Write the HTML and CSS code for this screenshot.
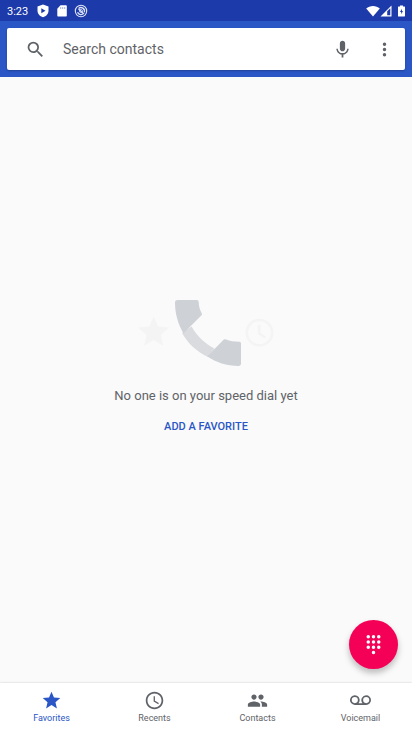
FILE: index.html
```html
<!DOCTYPE html>
<html lang="en">
<head>
<meta charset="utf-8">
<meta name="viewport" content="width=device-width, initial-scale=1">
<title>Phone</title>
<link rel="stylesheet" href="styles.css">
</head>
<body>
<div class="status">
  <span class="clock">3:23</span>
  <svg class="status-icon" viewBox="0 0 14 14" aria-hidden="true"><path d="M7 .5 1.500 2.600v4.100C1.500 9.700 3.900 12.400 7 13.200c3.100-.8 5.500-3.500 5.500-6.500V2.600z" fill="#fff"/><path d="M5.300 4.300v5L9.500 6.800z" fill="#1c3aa9"/></svg>
  <svg class="status-icon" viewBox="0 0 14 14" aria-hidden="true"><path d="M5.500 1.200h5.300c.6 0 1 .4 1 1v9.300c0 .6-.4 1-1 1H3.300c-.6 0-1-.4-1-1V4.700z" fill="#fff"/><path d="M5.700 3v2M7.700 3v2M9.700 3v2" stroke="#1c3aa9" stroke-width=".4"/></svg>
  <svg class="status-icon" viewBox="0 0 14 14" aria-hidden="true" fill="none" stroke="#dfe4f5"><circle cx="7" cy="7" r="5.700" stroke-width="1.100"/><path d="M3.600 8.200A3.500 3.500 0 0 0 8.800 10M4.600 4.500A3.500 3.500 0 0 1 10.300 8.200M4.500 5l5.500 5" stroke-width="1.300"/><circle cx="7" cy="7" r="1.500" stroke-width=".8"/></svg>
  <span class="signals">
    <svg class="wifi" viewBox="0 0 14 12" aria-hidden="true"><path d="M7 11.500.2 3.500C2 2 4.500 1 7 1s5 1 6.800 2.500z" fill="#fff"/></svg>
    <svg class="cell" viewBox="0 0 12 12" aria-hidden="true"><path d="M11.500.5v11H.5z" fill="#fff"/><path d="M10.300 3.200v7.100H7.200v-4z" fill="#1c3aa9"/></svg>
    <svg class="battery" viewBox="0 0 7 12" aria-hidden="true"><path d="M2 .5h3v1h1.500c.3 0 .5.200.5.500v9c0 .3-.2.500-.5.500h-6A.5.500 0 0 1 0 11V2c0-.3.200-.5.500-.5H2z" fill="#fff"/><path d="M3.900 3.800 2 7h1.200v2.200L5 6H3.900z" fill="#1c3aa9"/></svg>
  </span>
</div>
<header class="bar">
  <form class="search" role="search">
    <svg class="icon" viewBox="0 0 24 24" aria-hidden="true"><path d="M15.500 14h-.79l-.28-.27A6.471 6.471 0 0 0 16 9.500 6.500 6.500 0 1 0 9.500 16c1.610 0 3.090-.59 4.230-1.570l.27.28v.79l5 4.990L20.490 19zm-6 0C7.010 14 5 11.990 5 9.500S7.010 5 9.500 5 14 7.010 14 9.500 11.990 14 9.500 14z"/></svg>
    <input class="field" type="text" placeholder="Search contacts" aria-label="Search contacts">
    <button class="tool" type="button" aria-label="Voice search"><svg class="icon" viewBox="0 0 24 24"><path d="M12 14c1.660 0 2.990-1.340 2.990-3L15 5c0-1.660-1.340-3-3-3S9 3.340 9 5v6c0 1.660 1.340 3 3 3zm5.300-3c0 3-2.540 5.100-5.300 5.100S6.700 14 6.700 11H5c0 3.410 2.720 6.230 6 6.720V21h2v-3.280c3.280-.48 6-3.300 6-6.720z"/></svg></button>
    <button class="tool" type="button" aria-label="More options"><svg class="icon" viewBox="0 0 24 24"><path d="M12 8a2 2 0 1 0 0-4 2 2 0 0 0 0 4zm0 2a2 2 0 1 0 0 4 2 2 0 0 0 0-4zm0 6a2 2 0 1 0 0 4 2 2 0 0 0 0-4z"/></svg></button>
  </form>
</header>
<main class="empty">
  <svg class="art" viewBox="0 0 140 68" aria-hidden="true">
    <path d="M17.700 41l9.600 5.800-2.500-10.900 8.400-7.300-11.100-1L17.700 17.400l-4.400 10.200-11.100 1 8.400 7.300-2.500 10.900z" fill="#f4f4f5"/>
    <g fill="none" stroke="#f4f4f5" stroke-width="2.600"><circle cx="123.500" cy="33.700" r="12.700"/><path d="M123.200 26v8.500l6.300 4"/></g>
    <path d="M55.500 27.500C61 37 68.500 44.500 78.500 49.500L72 58C60 52 52 44.500 46 34z" fill="#d9dbdf"/>
    <path d="M39 3.500C39 1.800 40 1 41.500 1h19.300c1.200 0 1.800.8 1.900 2.200.2 4.300 1.100 7.600 2.900 10.800.6 1 .5 1.800-.3 2.600L54.800 27.100 47.500 34.400C42 25 39 14.500 39 3.500z" fill="#ced2d7"/>
    <path d="M71.300 57.500 87 41.200c1-1.100 1.900-1.300 3.100-.7 3.700 1.500 8.300 2.200 12.900 2.300 1.400 0 2 .6 2 1.800V64.500c0 1.600-.9 2.500-2.500 2.500-12.200-.2-22.200-3.500-31.200-9.500z" fill="#ced2d7"/>
  </svg>
  <p class="message">No one is on your speed dial yet</p>
  <button class="add" type="button">ADD A FAVORITE</button>
  <button class="fab" type="button" aria-label="Key pad">
    <svg class="dialpad" viewBox="0 0 24 24"><path d="M12 19a2 2 0 1 0 0 4 2 2 0 0 0 0-4zM6 1a2 2 0 1 0 0 4 2 2 0 0 0 0-4zm0 6a2 2 0 1 0 0 4 2 2 0 0 0 0-4zm0 6a2 2 0 1 0 0 4 2 2 0 0 0 0-4zM18 5a2 2 0 1 0 0-4 2 2 0 0 0 0 4zm-6 8a2 2 0 1 0 0 4 2 2 0 0 0 0-4zm6 0a2 2 0 1 0 0 4 2 2 0 0 0 0-4zm0-6a2 2 0 1 0 0 4 2 2 0 0 0 0-4zm-6 0a2 2 0 1 0 0 4 2 2 0 0 0 0-4zm0-6a2 2 0 1 0 0 4 2 2 0 0 0 0-4z"/></svg>
  </button>
</main>
<nav class="tabs">
  <a class="tab active" href="#favorites" aria-current="page"><svg class="icon" viewBox="0 0 24 24" aria-hidden="true"><path d="M12 17.270 18.180 21l-1.640-7.030L22 9.240l-7.190-.61L12 2 9.190 8.630 2 9.240l5.460 4.730L5.820 21z"/></svg>Favorites</a>
  <a class="tab" href="#recents"><svg class="icon" viewBox="0 0 24 24" aria-hidden="true"><path d="M11.990 2C6.470 2 2 6.480 2 12s4.470 10 9.990 10C17.520 22 22 17.520 22 12S17.520 2 11.990 2zM12 20c-4.420 0-8-3.580-8-8s3.580-8 8-8 8 3.580 8 8-3.580 8-8 8zm.5-13H11v6l5.250 3.150.75-1.230-4.500-2.670z"/></svg>Recents</a>
  <a class="tab" href="#contacts"><svg class="icon" viewBox="0 0 24 24" aria-hidden="true"><path d="M16 11c1.660 0 2.990-1.340 2.990-3S17.660 5 16 5s-3 1.340-3 3 1.340 3 3 3zm-8 0c1.660 0 2.990-1.340 2.990-3S9.660 5 8 5 5 6.340 5 8s1.340 3 3 3zm0 2c-2.330 0-7 1.170-7 3.500V19h14v-2.500c0-2.330-4.670-3.500-7-3.500zm8 0c-.29 0-.62.020-.97.050 1.160.84 1.970 1.970 1.970 3.450V19h6v-2.500c0-2.330-4.670-3.500-7-3.500z"/></svg>Contacts</a>
  <a class="tab" href="#voicemail"><svg class="icon" viewBox="0 0 24 24" aria-hidden="true"><path d="M18.500 6a5.500 5.500 0 0 0-4.400 8.800l.15.200h-4.500A5.500 5.500 0 1 0 5.500 17h13a5.500 5.500 0 0 0 0-11zm-13 9a3.500 3.500 0 1 1 0-7 3.500 3.500 0 0 1 0 7zm13 0a3.500 3.500 0 1 1 0-7 3.500 3.500 0 0 1 0 7z"/></svg>Voicemail</a>
</nav>
</body>
</html>
```
FILE: styles.css
```css
* {
  box-sizing: border-box;
}

body {
  margin: 0;
  min-height: 100vh;
  display: flex;
  flex-direction: column;
  background: #fafafa;
  color: #5f6368;
  font-family: Roboto, "Liberation Sans", sans-serif;
}

button {
  padding: 0;
  border: 0;
  background: none;
  font: inherit;
  cursor: pointer;
}

svg {
  display: block;
  flex: none;
}

.icon {
  width: 21px;
  height: 21px;
  fill: currentColor;
}

.status {
  display: flex;
  align-items: center;
  gap: 5px;
  height: 21px;
  padding: 0 7px;
  background: #1c3aa9;
  color: #fff;
  font-size: 11px;
}

.clock {
  margin-right: 3px;
  line-height: 20px;
  padding-top: 2px;
}

.status-icon {
  width: 14px;
  height: 14px;
}

.signals {
  display: flex;
  margin-left: auto;
}

.wifi {
  width: 14px;
  height: 12px;
}

.cell {
  width: 12px;
  height: 12px;
}

.battery {
  width: 7px;
  height: 12px;
  margin-left: 6px;
}

.bar {
  padding: 7px;
  background: #2a56c6;
}

.search {
  display: flex;
  align-items: center;
  height: 42px;
  padding-left: 18px;
  border-radius: 2px;
  background: #fff;
  box-shadow: 0 1px 2px rgba(0, 0, 0, 0.25);
}

.field {
  flex: 1;
  min-width: 0;
  margin-left: 17px;
  padding: 0;
  border: 0;
  outline: 0;
  background: none;
  color: #5f6368;
  font: 14px/20px Roboto, "Liberation Sans", sans-serif;
}

.field::placeholder {
  color: #5f6368;
  opacity: 1;
}

.tool {
  display: grid;
  place-items: center;
  width: 42px;
  height: 42px;
  color: #5f6368;
}

.empty {
  position: relative;
  flex: 1;
  display: flex;
  flex-direction: column;
  align-items: center;
  justify-content: center;
  padding-bottom: 14px;
}

.art {
  width: 140px;
  height: 68px;
}

.message {
  margin: 19px 0 0;
  font-size: 13px;
  line-height: 20px;
}

.add {
  height: 42px;
  color: #2a56c6;
  font-size: 11px;
  font-weight: 500;
}

.fab {
  position: absolute;
  right: 14px;
  bottom: 14px;
  display: grid;
  place-items: center;
  width: 49px;
  height: 49px;
  border-radius: 50%;
  background: #f50057;
  color: #fff;
  box-shadow: 0 4px 6px rgba(0, 0, 0, 0.25);
}

.dialpad {
  width: 21px;
  height: 21px;
  fill: currentColor;
}

.tabs {
  display: flex;
  height: 49px;
  background: #fff;
  box-shadow: 0 0 2px rgba(0, 0, 0, 0.2);
}

.tab {
  flex: 1;
  display: flex;
  flex-direction: column;
  align-items: center;
  gap: 1px;
  padding-top: 7px;
  color: #5f6368;
  font-size: 9px;
  line-height: 12px;
  text-decoration: none;
}

.active {
  color: #2a56c6;
}
```
